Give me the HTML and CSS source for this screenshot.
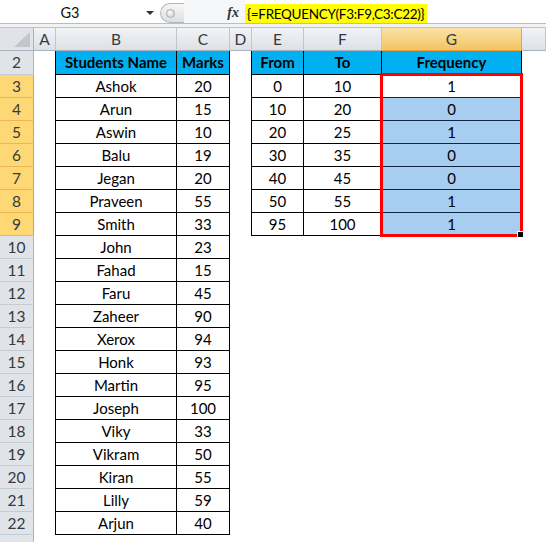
FILE: index.html
```html
<!DOCTYPE html>
<html>
<head>
<meta charset="utf-8">
<link rel="stylesheet" href="styles.css">
</head>
<body>
<div class="app">
  <div class="fbar">
    <div class="namebox"><span class="name">G3</span><span class="drop"></span></div>
    <div class="pill"><span class="dot"></span></div>
    <div class="fxarea"><span class="fx">fx</span></div>
    <div class="formula">{=FREQUENCY(F3:F9,C3:C22)}</div>
  </div>
  <div class="strip"></div>
  <div class="sheet">
    <div class="corner"><svg width="16" height="15" viewBox="0 0 16 15"><polygon points="16,0 16,15 0,15" fill="#c3c7cd"/></svg></div>
    <div class="ch">A</div><div class="ch">B</div><div class="ch">C</div><div class="ch">D</div><div class="ch">E</div><div class="ch">F</div><div class="ch sel">G</div><div class="ch last"></div>

    <div class="rh">2</div><div class="c lb"></div><div class="d h">Students Name</div><div class="d h">Marks</div><div class="c lb"></div><div class="d h">From</div><div class="d h">To</div><div class="d h">Frequency</div><div class="c"></div>
    <div class="rh sel">3</div><div class="c lb"></div><div class="d">Ashok</div><div class="d">20</div><div class="c lb"></div><div class="d">0</div><div class="d">10</div><div class="d act">1<div class="selbox"><span class="handle"></span></div></div><div class="c"></div>
    <div class="rh sel">4</div><div class="c lb"></div><div class="d">Arun</div><div class="d">15</div><div class="c lb"></div><div class="d">10</div><div class="d">20</div><div class="d s">0</div><div class="c"></div>
    <div class="rh sel">5</div><div class="c lb"></div><div class="d">Aswin</div><div class="d">10</div><div class="c lb"></div><div class="d">20</div><div class="d">25</div><div class="d s">1</div><div class="c"></div>
    <div class="rh sel">6</div><div class="c lb"></div><div class="d">Balu</div><div class="d">19</div><div class="c lb"></div><div class="d">30</div><div class="d">35</div><div class="d s">0</div><div class="c"></div>
    <div class="rh sel">7</div><div class="c lb"></div><div class="d">Jegan</div><div class="d">20</div><div class="c lb"></div><div class="d">40</div><div class="d">45</div><div class="d s">0</div><div class="c"></div>
    <div class="rh sel">8</div><div class="c lb"></div><div class="d">Praveen</div><div class="d">55</div><div class="c lb"></div><div class="d">50</div><div class="d">55</div><div class="d s">1</div><div class="c"></div>
    <div class="rh sel">9</div><div class="c lb"></div><div class="d">Smith</div><div class="d">33</div><div class="c lb"></div><div class="d">95</div><div class="d">100</div><div class="d s">1</div><div class="c"></div>
    <div class="rh">10</div><div class="c lb"></div><div class="d">John</div><div class="d">23</div><div class="c"></div><div class="c"></div><div class="c"></div><div class="c"></div><div class="c"></div>
    <div class="rh">11</div><div class="c lb"></div><div class="d">Fahad</div><div class="d">15</div><div class="c"></div><div class="c"></div><div class="c"></div><div class="c"></div><div class="c"></div>
    <div class="rh">12</div><div class="c lb"></div><div class="d">Faru</div><div class="d">45</div><div class="c"></div><div class="c"></div><div class="c"></div><div class="c"></div><div class="c"></div>
    <div class="rh">13</div><div class="c lb"></div><div class="d">Zaheer</div><div class="d">90</div><div class="c"></div><div class="c"></div><div class="c"></div><div class="c"></div><div class="c"></div>
    <div class="rh">14</div><div class="c lb"></div><div class="d">Xerox</div><div class="d">94</div><div class="c"></div><div class="c"></div><div class="c"></div><div class="c"></div><div class="c"></div>
    <div class="rh">15</div><div class="c lb"></div><div class="d">Honk</div><div class="d">93</div><div class="c"></div><div class="c"></div><div class="c"></div><div class="c"></div><div class="c"></div>
    <div class="rh">16</div><div class="c lb"></div><div class="d">Martin</div><div class="d">95</div><div class="c"></div><div class="c"></div><div class="c"></div><div class="c"></div><div class="c"></div>
    <div class="rh">17</div><div class="c lb"></div><div class="d">Joseph</div><div class="d">100</div><div class="c"></div><div class="c"></div><div class="c"></div><div class="c"></div><div class="c"></div>
    <div class="rh">18</div><div class="c lb"></div><div class="d">Viky</div><div class="d">33</div><div class="c"></div><div class="c"></div><div class="c"></div><div class="c"></div><div class="c"></div>
    <div class="rh">19</div><div class="c lb"></div><div class="d">Vikram</div><div class="d">50</div><div class="c"></div><div class="c"></div><div class="c"></div><div class="c"></div><div class="c"></div>
    <div class="rh">20</div><div class="c lb"></div><div class="d">Kiran</div><div class="d">55</div><div class="c"></div><div class="c"></div><div class="c"></div><div class="c"></div><div class="c"></div>
    <div class="rh">21</div><div class="c lb"></div><div class="d">Lilly</div><div class="d">59</div><div class="c"></div><div class="c"></div><div class="c"></div><div class="c"></div><div class="c"></div>
    <div class="rh">22</div><div class="c lb"></div><div class="d">Arjun</div><div class="d">40</div><div class="c"></div><div class="c"></div><div class="c"></div><div class="c"></div><div class="c"></div>
    <div class="rh"></div><div class="c"></div><div class="c"></div><div class="c"></div><div class="c"></div><div class="c"></div><div class="c"></div><div class="c"></div><div class="c"></div>
  </div>
</div>
</body>
</html>
```
FILE: styles.css
```css
html, body {
  margin: 0;
  padding: 0;
  background: #fff;
}
.app {
  width: 546px;
  height: 542px;
  overflow: hidden;
  font-family: Lato, "Open Sans", sans-serif;
  color: #000;
}
.fbar {
  display: flex;
  height: 23px;
  border-bottom: 1px solid #b9bcc0;
  background: #fff;
  box-sizing: content-box;
}
.namebox {
  width: 160px;
  display: flex;
  align-items: center;
}
.name {
  flex: 1;
  text-align: center;
  padding-right: 6px;
  padding-top: 2px;
  font-size: 14.5px;
  color: #111;
}
.drop {
  width: 0;
  height: 0;
  border-left: 4px solid transparent;
  border-right: 4px solid transparent;
  border-top: 4px solid #333;
  margin-right: 6px;
  margin-top: 3px;
}
.pill {
  width: 24px;
  height: 20px;
  margin-top: 3px;
  box-sizing: border-box;
  border: 1px solid #b3b6ba;
  border-right: none;
  border-radius: 11px 0 0 11px;
  background: linear-gradient(#f7f7f7, #dcdee1);
  display: flex;
  align-items: center;
}
.dot {
  width: 7px;
  height: 7px;
  margin-left: 5px;
  border-radius: 50%;
  background: radial-gradient(circle at 40% 35%, #fff, #c4c6c9);
  border: 1px solid #a8abaf;
}
.fxarea {
  width: 61px;
  display: flex;
  justify-content: flex-end;
  align-items: center;
  padding-right: 6px;
  box-sizing: border-box;
  background: #f6f7f8;
}
.fx {
  font-family: "Liberation Serif", serif;
  font-style: italic;
  font-weight: bold;
  font-size: 14px;
  color: #333;
  padding-top: 2px;
}
.formula {
  margin-top: 4px;
  height: 19px;
  background: #ffff00;
  padding: 0 3px 0 2px;
  font-size: 13.5px;
  letter-spacing: -0.3px;
  line-height: 20px;
  white-space: nowrap;
}
.strip {
  height: 3px;
  background: #f1f2f4;
  border-bottom: 1px solid #bfc3c8;
}
.sheet {
  display: grid;
  grid-template-columns: 34px 22px 121px 53px 22px 52px 78px 140px 1fr;
  grid-template-rows: 23px 24px repeat(21, 23px);
  font-size: 15px;
}
.sheet > div {
  box-sizing: border-box;
}
.corner {
  background: #e0e3e8;
  border-right: 1px solid #a9b3bf;
  border-bottom: 1px solid #a9b3bf;
  display: flex;
  align-items: flex-end;
  justify-content: flex-end;
  padding: 0 3px 3px 0;
}
.corner svg {
  display: block;
}
.ch {
  background: linear-gradient(#f1f3f5, #dde1e6);
  border-right: 1px solid #c0c6ce;
  border-bottom: 1px solid #a9b3bf;
  text-align: center;
  line-height: 22px;
  color: #363a40;
  font-size: 15.5px;
}
.ch.sel {
  background: linear-gradient(#fbe3a6, #f3c463);
  border-right-color: #e2a646;
  border-bottom-color: #f29a2c;
}
.rh {
  background: #e0e4e9;
  border-right: 1px solid #a9b3bf;
  border-bottom: 1px solid #c5cbd3;
  text-align: center;
  line-height: 23px;
  color: #363a40;
  font-size: 15.5px;
}
.rh.sel {
  background: #fdd874;
  border-right-color: #e39e35;
  border-bottom-color: #edb555;
}
.c {
  background: #fff;
}
.c.lb {
  border-right: 1px solid #000;
}
.d {
  border-right: 1px solid #000;
  border-bottom: 1px solid #000;
  text-align: center;
  line-height: 23px;
  white-space: nowrap;
  color: #000;
}
.d.h {
  background: #00b0f0;
  font-weight: bold;
}
.d.s {
  background: #a7cdf0;
  border-bottom-color: #0f2742;
}
.d.act {
  position: relative;
  background: #fff;
  border-bottom-color: #0f2742;
}
.selbox {
  position: absolute;
  left: -2px;
  top: -2px;
  width: 143px;
  height: 164px;
  box-sizing: border-box;
  border: 3px solid #ff0000;
  z-index: 2;
  pointer-events: none;
}
.handle {
  position: absolute;
  right: -3px;
  bottom: -3px;
  width: 5px;
  height: 5px;
  background: #000;
  border-left: 1px solid #fff;
  border-top: 1px solid #fff;
}
```
